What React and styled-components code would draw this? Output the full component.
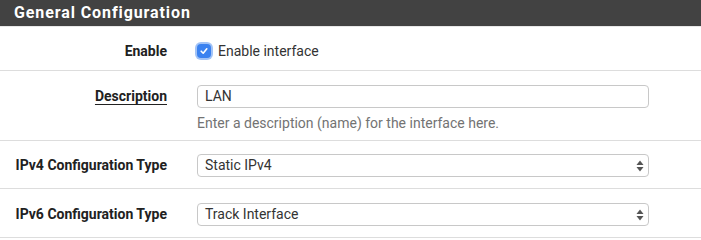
import React from "react";
import styled, { createGlobalStyle } from "styled-components";

const Global = createGlobalStyle`
  html, body { margin: 0; padding: 0; background: #fff; }
  body { font-family: Roboto, "Noto Sans", "Liberation Sans", sans-serif; font-size: 14px; color: #212121; }
`;

const Panel = styled.div`
  width: 701px;
`;

const Heading = styled.div`
  height: 27px;
  background: #424242;
  color: #fff;
  font-weight: 700;
  font-size: 16px;
  letter-spacing: 0.9px;
  line-height: 26px;
  padding-left: 14px;
  border-bottom: 1px solid #e8e8e8;
  box-sizing: border-box;
`;

const Row = styled.div`
  display: grid;
  grid-template-columns: 167px 452px;
  column-gap: 30px;
  align-items: start;
  padding: ${p => p.$pad};
  border-bottom: 1px solid #ddd;
`;

const Label = styled.div`
  text-align: right;
  font-weight: 700;
  font-size: 14px;
  line-height: ${p => p.$lh || "23px"};
  color: #212121;
  span {
    text-decoration: ${p => (p.$underline ? "underline" : "none")};
    text-underline-offset: 3px;
  }
`;

const CheckLine = styled.label`
  display: flex;
  align-items: center;
  gap: 5px;
  line-height: 20px;
  margin-left: -2px;
  color: #333;
`;

const CheckBox = styled.span`
  width: 14px;
  height: 14px;
  margin: 2px;
  border-radius: 4px;
  background: #3b82f0;
  box-shadow: 0 0 0 2px rgba(100, 155, 240, 0.6);
  display: inline-flex;
  align-items: center;
  justify-content: center;
`;

const TextBox = styled.div`
  height: 23px;
  box-sizing: border-box;
  border: 1px solid #c8c8c8;
  border-radius: 4px;
  padding: 0 ${p => (p.$select ? "4px" : "7px")} 0 7px;
  line-height: 21px;
  color: #333;
  display: flex;
  align-items: center;
  justify-content: space-between;
`;

const Help = styled.div`
  line-height: 20px;
  margin-top: 5px;
  color: #737373;
`;

const Arrows = () => (
  <svg width="8" height="12" viewBox="0 0 8 12">
    <path d="M4 0.5 L7.5 5 L0.5 5 Z" fill="#555" />
    <path d="M4 11.5 L7.5 7 L0.5 7 Z" fill="#555" />
  </svg>
);

export default function App() {
  return (
    <>
      <Global />
      <Panel>
        <Heading>General Configuration</Heading>
        <Row $pad="14px 0 9px">
          <Label $lh="20px">Enable</Label>
          <CheckLine>
            <CheckBox>
              <svg width="10" height="10" viewBox="0 0 10 10">
                <path d="M2.2 5.2 L4.2 7.2 L7.8 2.8" stroke="#fff" strokeWidth="1.6" fill="none" strokeLinecap="round" strokeLinejoin="round" />
              </svg>
            </CheckBox>
            Enable interface
          </CheckLine>
        </Row>
        <Row $pad="14px 0 7px">
          <Label $underline><span>Description</span></Label>
          <div>
            <TextBox>LAN</TextBox>
            <Help>Enter a description (name) for the interface here.</Help>
          </div>
        </Row>
        <Row $pad="13px 0 11px">
          <Label>IPv4 Configuration Type</Label>
          <TextBox $select>Static IPv4<Arrows /></TextBox>
        </Row>
        <Row $pad="14px 0 11px">
          <Label>IPv6 Configuration Type</Label>
          <TextBox $select>Track Interface<Arrows /></TextBox>
        </Row>
      </Panel>
    </>
  );
}
